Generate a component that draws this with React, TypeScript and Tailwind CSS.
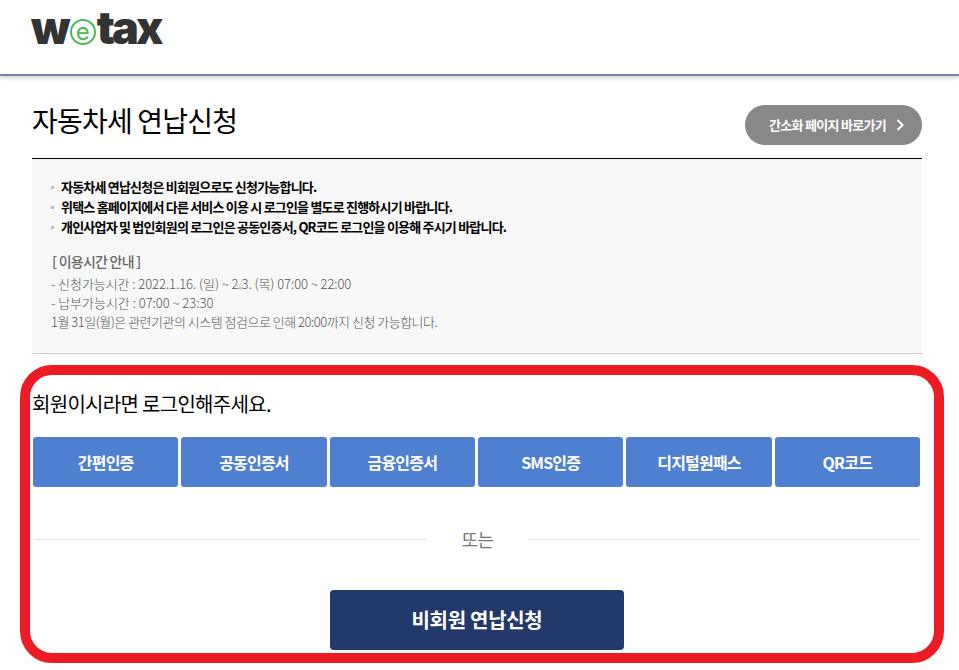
const kr = "font-['Noto_Sans_CJK_KR','Noto_Sans',sans-serif]";

const authButtons = ["간편인증", "공동인증서", "금융인증서", "SMS인증", "디지털원패스", "QR코드"];

const notices = [
  "자동차세 연납신청은 비회원으로도 신청가능합니다.",
  "위택스 홈페이지에서 다른 서비스 이용 시 로그인을 별도로 진행하시기 바랍니다.",
  "개인사업자 및 법인회원의 로그인은 공동인증서, QR코드 로그인을 이용해 주시기 바랍니다.",
];

const Logo = () => (
  <div className="flex items-center ml-[-1px] h-[40px] text-[#333333] text-[45px] font-black tracking-[-2.8px] leading-[40px] font-['Inter',sans-serif]">
    <span>w</span>
    <span className="flex items-center justify-center shrink-0 w-[26px] h-[26px] ml-[2px] mr-[1px] mt-[8px] rounded-full border-2 border-[#4fb958] text-[#4fb958] text-[24px] font-normal leading-[20px] tracking-normal">
      e
    </span>
    <span>tax</span>
  </div>
);

export default function App() {
  return (
    <div className={`${kr} w-[959px] h-[670px] overflow-hidden bg-white text-black`}>
      {/* HEADER */}
      <header className="h-[76px] border-b-2 border-[#7d82a8] shadow-[0_2px_4px_rgba(0,0,0,0.18)] pl-[32px] pt-[8px]">
        <Logo />
      </header>

      {/* TITLE */}
      <div className="ml-[32px] w-[890px] mt-[29px] h-[53px] flex justify-between border-b border-black box-content">
        <h1 className="text-[28px] leading-[30px] tracking-[-0.8px]">자동차세 연납신청</h1>
        <a className="w-[177px] h-[40px] rounded-full bg-[#888888] text-white text-[13px] font-bold tracking-[-0.7px] flex items-center pl-[24px]">
          간소화 페이지 바로가기
          <svg className="ml-[10px]" width="9" height="12" viewBox="0 0 9 12" fill="none" stroke="#ffffff" strokeWidth="2">
            <path d="M1.5 1 L6.5 6 L1.5 11" />
          </svg>
        </a>
      </div>

      {/* NOTICE */}
      <div className="ml-[32px] w-[890px] h-[195px] bg-[#f8f8f8] border-b border-[#cccccc] pt-[18px] pl-[19px]">
        <ul className="text-[13px] leading-[20px] font-bold tracking-[-0.8px]">
          {notices.map((n) => (
            <li key={n} className="flex items-center">
              <span className="w-[3px] h-[3px] bg-[#bbbbbb] mr-[7px]" />
              {n}
            </li>
          ))}
        </ul>
        <p className="mt-[14px] text-[14px] leading-[20px] font-medium text-[#666666] tracking-[-0.75px] ml-[1px]">[ 이용시간 안내 ]</p>
        <div className="mt-[3px] text-[13px] leading-[19px] font-light text-[#555555]">
          <p className="tracking-[-0.06px]">- 신청가능시간 : 2022.1.16. (일) ~ 2.3. (목) 07:00 ~ 22:00</p>
          <p className="tracking-[-0.02px]">- 납부가능시간 : 07:00 ~ 23:30</p>
          <p className="tracking-[-0.5px]">1월 31일(월)은 관련기관의 시스템 점검으로 인해 20:00까지 신청 가능합니다.</p>
        </div>
      </div>

      {/* LOGIN */}
      <section className="ml-[20px] mt-[11px] w-[924px] h-[298px] border-[10px] border-[#ed1c24] rounded-[32px] pl-[2px] pr-[14px]">
        <p className="text-[20px] leading-[28px] tracking-[-0.7px] mt-[15px]">회원이시라면 로그인해주세요.</p>
        <div className="grid grid-cols-6 gap-[3px] ml-[1px] mt-[19px]">
          {authButtons.map((b) => (
            <button key={b} className="h-[50px] rounded-[3px] bg-[#4f7fd0] text-white text-[16px] font-bold tracking-[-0.8px]">
              {b}
            </button>
          ))}
        </div>
        <div className="flex items-center ml-[3px] mt-[40px] h-[24px]">
          <div className="flex-1 h-px bg-[#e2e2e2]" />
          <span className="w-[101px] text-center text-[18px] text-[#777777] tracking-[-0.5px]">또는</span>
          <div className="flex-1 h-px bg-[#e2e2e2]" />
        </div>
        <button className="block ml-[298px] mt-[39px] w-[294px] h-[60px] rounded-[4px] bg-[#23386b] text-white text-[20px] font-bold tracking-[-0.3px]">
          비회원 연납신청
        </button>
      </section>
    </div>
  );
}
